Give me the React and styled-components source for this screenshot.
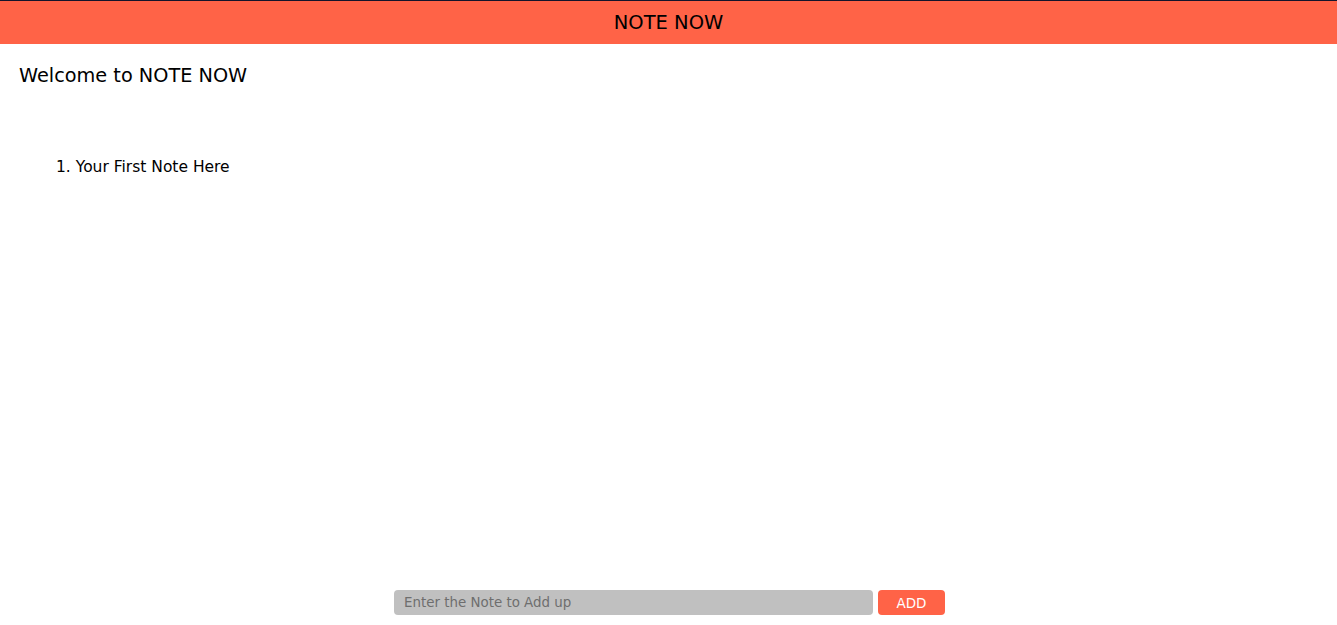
import React from 'react'
import styled, { createGlobalStyle } from 'styled-components'

const GlobalStyle = createGlobalStyle`
  html, body {
    margin: 0;
    padding: 0;
    height: 100%;
    background: #fff;
  }
  body {
    font-family: "DejaVu Sans", "Noto Sans", sans-serif;
  }
  #root {
    height: 100%;
  }
`

const Page = styled.div`
  height: 100vh;
  display: flex;
  flex-direction: column;
`

const Header = styled.header`
  background: tomato;
  border-top: 1px solid #14142b;
  height: 43px;
  display: flex;
  align-items: center;
  justify-content: center;
  font-size: 19.5px;
  color: #000;
`

const Main = styled.main`
  flex: 1;
  padding: 20px 19px 0 19px;
`

const Welcome = styled.h2`
  margin: 0;
  font-size: 19.3px;
  font-weight: 500;
  color: #000;
`

const NoteList = styled.ol`
  margin: 71px 0 0 0;
  padding-left: 37px;
  font-size: 15.5px;
  color: #000;
  list-style-position: inside;
`

const NoteItem = styled.li``

const Footer = styled.form`
  display: flex;
  justify-content: center;
  gap: 5px;
  padding: 0 0 10px 2px;
`

const NoteInput = styled.input`
  width: 479px;
  height: 25px;
  box-sizing: border-box;
  border: none;
  border-radius: 4px;
  background: silver;
  padding: 0 10px;
  font-family: inherit;
  font-size: 13.4px;
  outline: none;
  &::placeholder {
    color: #6e6e6e;
  }
`

const AddButton = styled.button`
  width: 67px;
  height: 25px;
  border: none;
  border-radius: 4px;
  background: tomato;
  color: #fff;
  font-family: inherit;
  font-size: 13.5px;
  cursor: pointer;
`

export default function App() {
  const notes = ['Your First Note Here']
  return (
    <Page>
      <GlobalStyle />
      <Header>NOTE NOW</Header>
      <Main>
        <Welcome>Welcome to NOTE NOW</Welcome>
        <NoteList>
          {notes.map((n, i) => (
            <NoteItem key={i}>{n}</NoteItem>
          ))}
        </NoteList>
      </Main>
      <Footer onSubmit={(e) => e.preventDefault()}>
        <NoteInput placeholder="Enter the Note to Add up" />
        <AddButton type="submit">ADD</AddButton>
      </Footer>
    </Page>
  )
}
